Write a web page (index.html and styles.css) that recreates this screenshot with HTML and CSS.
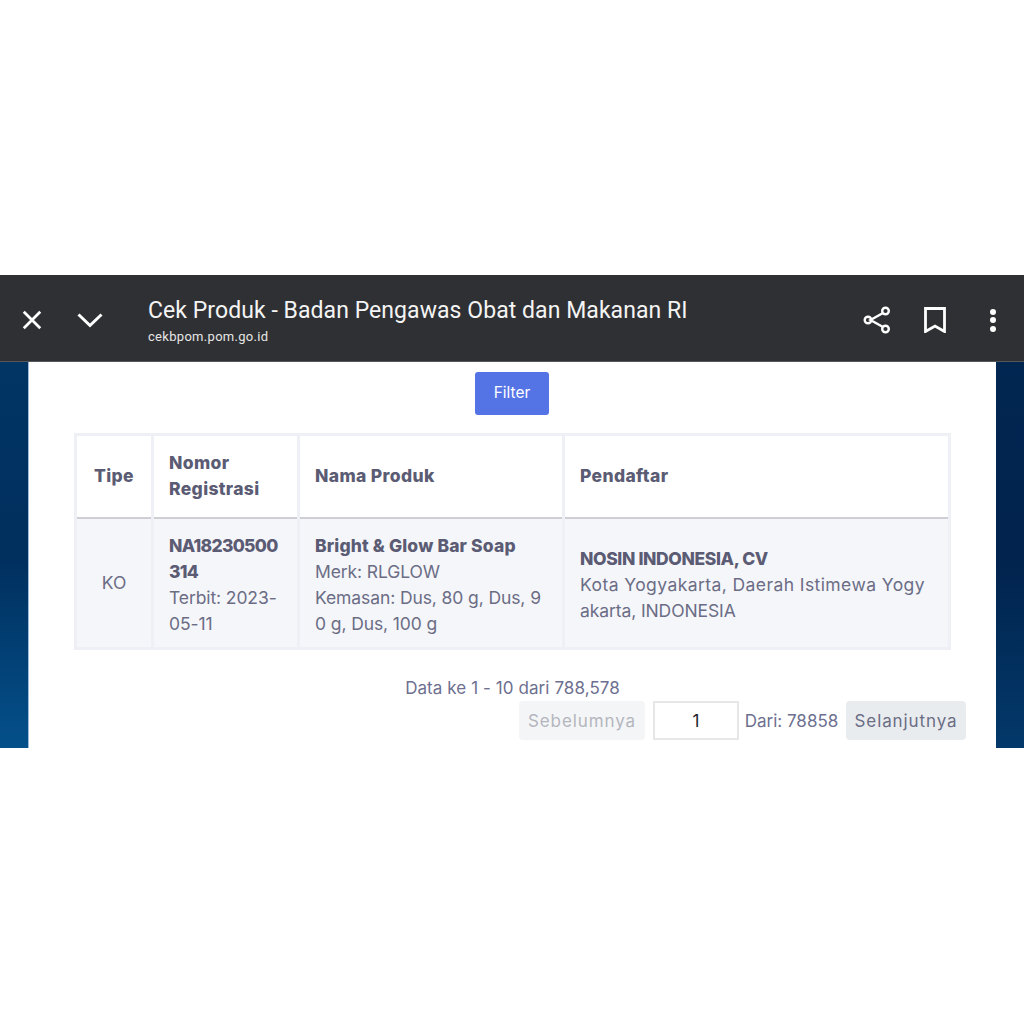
FILE: index.html
```html
<!DOCTYPE html>
<html lang="id">
<head>
<meta charset="utf-8">
<title>Cek Produk</title>
<link rel="stylesheet" href="styles.css">
</head>
<body>
<main class="shot">
  <header class="toolbar">
    <svg class="icon close" viewBox="0 0 24 24"><path d="M3 3 21 21M21 3 3 21"/></svg>
    <svg class="icon chevron" viewBox="0 0 26 16"><path d="M1.500 2.500 13 13.500 24.500 2.500"/></svg>
    <div class="titles">
      <div class="title">Cek Produk - Badan Pengawas Obat dan Makanan RI</div>
      <div class="url">cekbpom.pom.go.id</div>
    </div>
    <svg class="icon share" viewBox="0 0 28 30"><path d="M20 8 7.500 15 20 22"/><circle cx="22.500" cy="6" r="3.300"/><circle cx="5" cy="15" r="3.300"/><circle cx="22.500" cy="24" r="3.300"/></svg>
    <svg class="icon mark" viewBox="0 0 22 26"><path d="M1.500 1.500H20.500V24.500L11 19 1.500 24.500Z"/></svg>
    <div class="dots"><span></span><span></span><span></span></div>
  </header>
  <section class="page">
    <div class="card">
      <button class="filter">Filter</button>
      <table class="data">
        <thead>
          <tr>
            <th class="c1 center">Tipe</th>
            <th class="c2">Nomor<br>Registrasi</th>
            <th class="c3">Nama Produk</th>
            <th class="c4">Pendaftar</th>
          </tr>
        </thead>
        <tbody>
          <tr>
            <td class="center">KO</td>
            <td><b class="tight">NA18230500<br>314</b><br>Terbit: 2023-<br>05-11</td>
            <td><b>Bright &amp; Glow Bar Soap</b><br>Merk: RLGLOW<br>Kemasan: Dus, 80 g, Dus, 9<br>0 g, Dus, 100 g</td>
            <td><b class="snug">NOSIN INDONESIA, CV</b><br><span class="wide">Kota Yogyakarta, Daerah Istimewa Yogy</span><br>akarta, INDONESIA</td>
          </tr>
        </tbody>
      </table>
      <p class="info">Data ke 1 - 10 dari 788,578</p>
      <div class="pager">
        <span class="btn prev">Sebelumnya</span>
        <span class="num">1</span>
        <span class="of">Dari: 78858</span>
        <span class="btn next">Selanjutnya</span>
      </div>
    </div>
  </section>
</main>
</body>
</html>
```
FILE: styles.css
```css
html, body { margin: 0; padding: 0; background: #fff; }
body { height: 1024px; overflow: hidden; font-family: "Inter", "Open Sans", sans-serif; }
.shot { padding-top: 275px; }

.toolbar {
  box-sizing: border-box;
  height: 87px;
  padding-top: 4px;
  background: #2f3033;
  border-bottom: 1px solid #55565a;
  display: flex;
  align-items: center;
  color: #fff;
}
.icon { fill: none; stroke: #fff; display: block; flex: none; }
.close { width: 22px; height: 22px; margin-left: 21px; stroke-width: 3; }
.chevron { width: 26px; height: 16px; margin-left: 34px; stroke-width: 3; }
.titles { margin-left: 45px; padding-top: 2px; flex: 1; font-family: "Roboto", sans-serif; }
.title { font-size: 23px; line-height: 28px; color: #f4f4f4; letter-spacing: 0.06px; }
.url { font-size: 13px; line-height: 16px; margin-top: 4px; color: #e6e6e6; letter-spacing: 0.3px; }
.share { width: 28px; height: 30px; stroke-width: 2.400; margin-right: 33px; }
.mark { width: 22px; height: 26px; stroke-width: 2.800; margin-right: 44px; }
.dots { display: flex; flex-direction: column; gap: 2.500px; margin-right: 28px; }
.dots span { width: 6px; height: 6px; border-radius: 50%; background: #fff; }

.page {
  height: 386px;
  padding: 0 28px 0 29px;
  background:
    linear-gradient(90deg, transparent 50%, rgba(0, 8, 40, 0.32) 50%),
    linear-gradient(180deg, #013564 0%, #012f5e 50%, #04508a 100%);
  overflow: hidden;
}
.card {
  height: 386px;
  background: #fff;
  box-shadow: -1px 0 0 #9fbbdc;
  display: flex;
  flex-direction: column;
  align-items: center;
  color: #6b6d85;
}
.filter {
  margin: 10px 1px 0 0;
  width: 74px;
  height: 43px;
  padding: 0 0 2px;
  border: 0;
  border-radius: 3px;
  background: #5474e6;
  color: #fff;
  font: 15.500px "Inter", sans-serif;
}
.data {
  margin: 18px 0 0;
  width: 877px;
  border-collapse: collapse;
  table-layout: fixed;
  font-size: 17.500px;
  line-height: 26px;
  letter-spacing: -0.1px;
  border: 3px solid #eef0f5;
}
.data th, .data td { box-sizing: border-box; border: 3px solid #eef0f5; padding: 0 15px; text-align: left; white-space: nowrap; }
.data th { height: 83px; font-weight: 800; font-size: 17.500px; letter-spacing: 0.35px; color: #5b5c74; border-bottom: 2px solid #cfced5; background: #fff; }
.data td { height: 131px; padding-top: 4px; border-top: 0; background: #f5f6fa; }
.data b { color: #5b5c74; font-weight: 800; letter-spacing: 0.15px; }
.data .tight { letter-spacing: -0.7px; }
.data .snug { letter-spacing: -0.38px; }
.wide { letter-spacing: 0.42px; }
.c1 { width: 77px; }
.c2 { width: 146px; }
.c3 { width: 265px; }
.data .center { text-align: center; padding: 0; }
.info { margin: 26px 0 0; font-size: 17px; line-height: 24px; letter-spacing: 0.08px; color: #6d7090; }
.pager {
  align-self: flex-end;
  margin: 1px 30px 0 0;
  display: flex;
  align-items: center;
  font-size: 17px;
}
.btn { display: flex; justify-content: center; align-items: center; height: 39px; border-radius: 4px; letter-spacing: 0.9px; }
.prev { width: 126px; background: #f4f5f6; color: #b4b6bf; }
.next { width: 120px; background: #e9ecef; color: #6b6d85; }
.num {
  box-sizing: border-box;
  width: 86px;
  height: 39px;
  margin-left: 8px;
  border: 2px solid #e7e7ea;
  color: #22222a;
  display: flex;
  justify-content: center;
  align-items: center;
}
.of { box-sizing: border-box; width: 107px; padding-right: 2px; text-align: center; color: #6d7090; }
```
